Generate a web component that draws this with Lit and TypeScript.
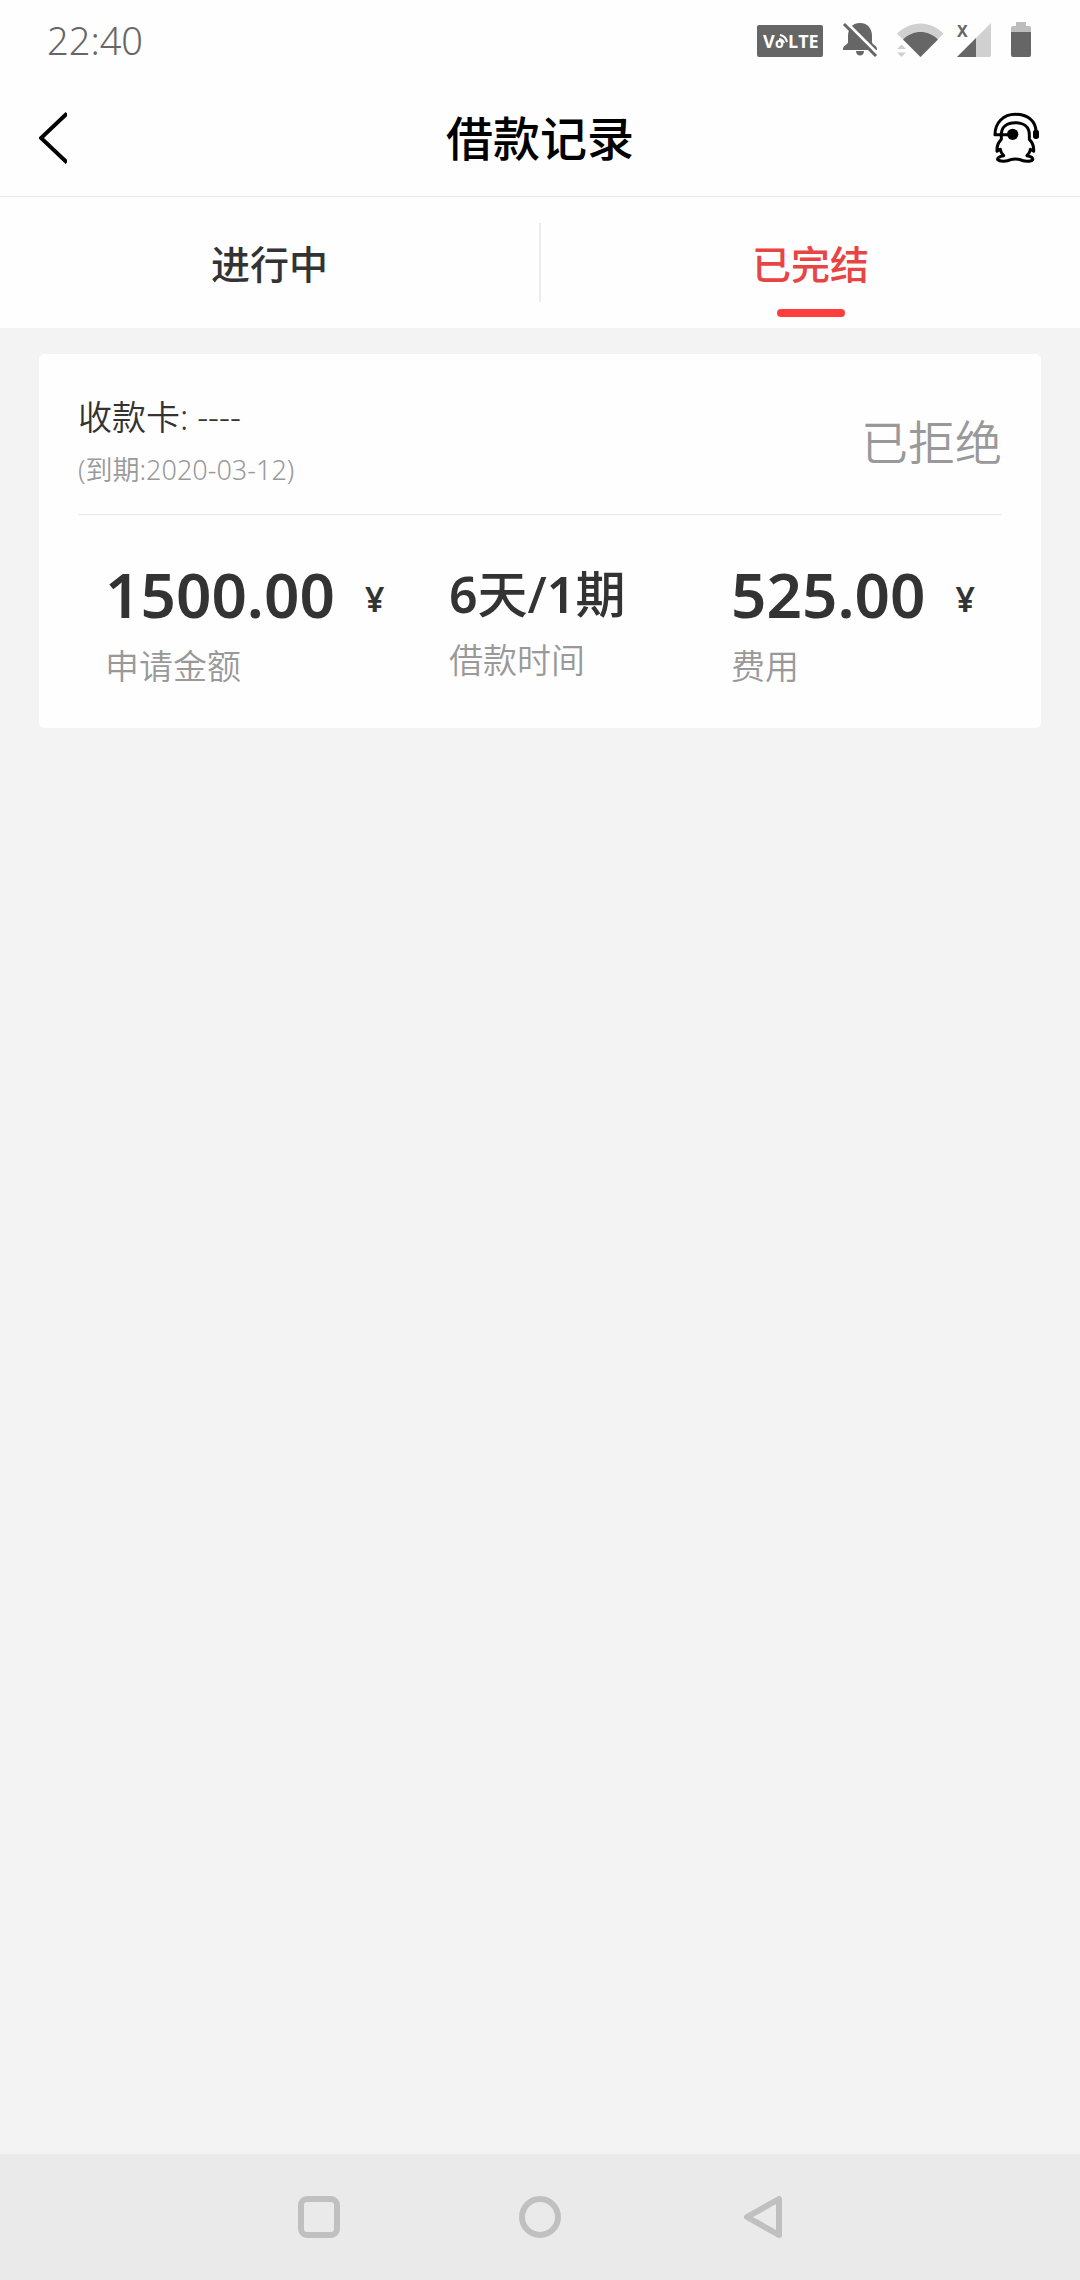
import { LitElement, html, css, svg } from "lit";
import { customElement, property, state } from "lit/decorators.js";
import { classMap } from "lit/directives/class-map.js";

@customElement("status-bar")
class StatusBar extends LitElement {
  static styles = css`
    :host {
      display: flex;
      align-items: center;
      justify-content: space-between;
      height: 80px;
      padding: 0 49px 0 47px;
      background: #fefefe;
      color: #666;
    }
    .time {
      font-size: 38px;
      line-height: 48px;
      font-weight: 350;
    }
    .icons {
      display: flex;
      gap: 12px;
    }
    svg {
      display: block;
    }
    .badge-text {
      font-family: "Open Sans", "Noto Sans", sans-serif;
      font-weight: 700;
      fill: #fff;
    }
    .mark {
      font-family: "Noto Sans", sans-serif;
      font-weight: 700;
      font-size: 16px;
      fill: #666;
    }
  `;

  render() {
    return html`
      <time class="time">22:40</time>
      <div class="icons">
        <svg width="73" height="40" viewBox="0 -2 73 40" role="img" aria-label="VoLTE">
          <rect x="0" y="3" width="66" height="32" rx="2" fill="#666" />
          <text class="badge-text" x="6" y="26" font-size="18">V</text>
          <text class="badge-text" x="18" y="26" font-size="14">o</text>
          <text class="badge-text" x="31" y="26" font-size="18">LTE</text>
          <g fill="none" stroke="#fff" stroke-width="2">
            <path d="M22 17a6 6 0 0 1 5 4" />
            <path d="M23 13a9 9 0 0 1 7 7" />
          </g>
        </svg>
        <svg width="43" height="40" viewBox="0 -2 43 40" aria-hidden="true">
          <path
            d="M18 1C10 1 6 7 6 14v6c0 3-5 3-5 7v1h34v-1c0-4-5-4-5-7v-6C30 7 26 1 18 1z"
            fill="#666"
          />
          <path d="M14 29h8c0 6-8 6-8 0z" fill="#666" />
          <path d="M4 0L37 33" stroke="#fefefe" stroke-width="3" />
          <path d="M2 2L34 34" stroke="#666" stroke-width="3" />
        </svg>
        <svg width="47" height="40" viewBox="0 -2 47 40" aria-hidden="true">
          <path d="M0 11.500C14-2 33-2 46.500 11.500L23.500 35z" fill="#d0d0d0" />
          <path d="M6 17.500C16 7.500 31 7.500 41 17.500L23.500 35z" fill="#666" />
          <path d="M0 27l4.500-4.500L9 27zM0 30.500h9L4.500 35z" fill="#d0d0d0" />
        </svg>
        <svg width="43" height="40" viewBox="0 -2 43 40" aria-hidden="true">
          <path d="M1 35L35 1v32q0 2-2 2z" fill="#d0d0d0" />
          <path d="M1 35L20 16v19z" fill="#666" />
          <text class="mark" x="1" y="15">X</text>
        </svg>
        <svg width="20" height="40" viewBox="0 -2 20 40" aria-hidden="true">
          <path d="M5 0h10v4h3q2 0 2 2v4H0V6q0-2 2-2h3z" fill="#bdbdbd" />
          <path d="M0 10h20v23q0 2-2 2H2q-2 0-2-2z" fill="#666" />
        </svg>
      </div>
    `;
  }
}

@customElement("title-bar")
class TitleBar extends LitElement {
  @property() heading = "";

  static styles = css`
    :host {
      display: grid;
      grid-template-columns: 1fr auto 1fr;
      align-items: center;
      height: 116px;
      padding: 0 39px;
      background: #fefefe;
      border-bottom: 1px solid #e8e8e8;
    }
    .heading {
      margin: 0;
      font-size: 47px;
      line-height: 60px;
      font-weight: 500;
      color: #000;
    }
    .action {
      display: block;
      padding: 0;
      border: 0;
      background: none;
      cursor: pointer;
    }
    .support {
      justify-self: end;
    }
    svg {
      display: block;
    }
  `;

  render() {
    return html`
      <button class="action" aria-label="返回">
        <svg width="28" height="52" viewBox="0 0 28 52">
          <path d="M28 1.500L2 26L28 50.500" fill="none" stroke="#000" stroke-width="4" />
        </svg>
      </button>
      <h1 class="heading">${this.heading}</h1>
      <button class="action support" aria-label="客服">
        <svg width="48" height="52" viewBox="99 66 144 156">
          <g fill="none" stroke="#000" stroke-width="9" stroke-linejoin="round">
            <path d="M228 126C228 92 202 73 166 73C130 73 105 98 105 134H150" />
            <path
              d="M124 148V134C124 110 142 98 166 98C190 98 208 110 208 134V148C218 158 222 170 221 184L211 178C210 187 205 193 201 197C213 199 220 204 218 209C212 216 190 214 180 209Q166 205 152 209C142 214 120 216 113 209C111 204 119 199 131 197C127 193 122 187 121 178L111 184C110 170 114 158 124 148Z"
            />
          </g>
          <circle cx="158" cy="133" r="17" />
          <rect x="219" y="119" width="18" height="28" rx="8" />
        </svg>
      </button>
    `;
  }
}

@customElement("loan-tabs")
class LoanTabs extends LitElement {
  @state() private active = 1;
  private labels = ["进行中", "已完结"];

  static styles = css`
    :host {
      display: block;
      background: #fefefe;
    }
    .tabs {
      display: grid;
      grid-template-columns: 1fr 2px 1fr;
      align-items: center;
      height: 131px;
    }
    .divider {
      height: 79px;
      background: #ebebeb;
    }
    .tab {
      display: flex;
      flex-direction: column;
      align-items: center;
      align-self: stretch;
      justify-content: flex-end;
      gap: 20px;
      padding: 0 0 11px;
      border: 0;
      background: none;
      font: inherit;
      font-size: 39px;
      line-height: 50px;
      font-weight: 500;
      color: #333;
      cursor: pointer;
    }
    .tab::after {
      content: "";
      width: 68px;
      height: 8px;
      border-radius: 4px;
    }
    .active {
      color: #e94444;
    }
    .active::after {
      background: #ff3d3d;
    }
  `;

  private tab(i: number) {
    return html`<button
      role="tab"
      class=${classMap({ tab: true, active: this.active === i })}
      aria-selected=${this.active === i}
      @click=${() => (this.active = i)}
    >
      ${this.labels[i]}
    </button>`;
  }

  render() {
    return html`<div class="tabs" role="tablist">
      ${this.tab(0)}<span class="divider" role="presentation"></span>${this.tab(1)}
    </div>`;
  }
}

@customElement("loan-card")
class LoanCard extends LitElement {
  static styles = css`
    :host {
      display: block;
      padding: 0 39px;
      border-radius: 5px;
      background: #fefefe;
    }
    .top {
      display: flex;
      align-items: center;
      justify-content: space-between;
      height: 160px;
      border-bottom: 1px solid #e8e8e8;
    }
    .top-text {
      padding-top: 14px;
    }
    .account {
      font-size: 34px;
      line-height: 58px;
      font-weight: 350;
      color: #333;
    }
    .due {
      font-size: 27px;
      line-height: 48px;
      font-weight: 350;
      color: #999;
    }
    .status {
      padding-top: 16px;
      font-size: 47px;
      line-height: 60px;
      font-weight: 350;
      color: #999;
    }
    .facts {
      display: grid;
      grid-template-columns: 344fr 282fr 271fr;
      margin: 0;
      padding: 35px 0 34px 27px;
    }
    .fact {
      display: flex;
      flex-direction: column-reverse;
      justify-content: flex-end;
    }
    .label {
      font-size: 34px;
      line-height: 56px;
      font-weight: 350;
      color: #999;
    }
    .value {
      margin: 0;
      font-size: 62px;
      line-height: 88px;
      font-weight: 600;
      color: #333;
      white-space: nowrap;
    }
    .period {
      padding-top: 6px;
      font-size: 50px;
      line-height: 76px;
      font-weight: 500;
    }
    .count {
      font-weight: 600;
    }
    .unit {
      margin-left: 30px;
      font-size: 34px;
      line-height: 40px;
      vertical-align: 6px;
    }
  `;

  render() {
    return html`
      <div class="top">
        <div class="top-text">
          <div class="account">收款卡: ----</div>
          <div class="due">(到期:2020-03-12)</div>
        </div>
        <div class="status">已拒绝</div>
      </div>
      <dl class="facts">
        <div class="fact">
          <dt class="label">申请金额</dt>
          <dd class="value">1500.00<span class="unit">¥</span></dd>
        </div>
        <div class="fact">
          <dt class="label">借款时间</dt>
          <dd class="value period"
            ><span class="count">6</span>天/<span class="count">1</span>期</dd
          >
        </div>
        <div class="fact">
          <dt class="label">费用</dt>
          <dd class="value">525.00<span class="unit">¥</span></dd>
        </div>
      </dl>
    `;
  }
}

@customElement("system-nav")
class SystemNav extends LitElement {
  static styles = css`
    :host {
      display: flex;
      justify-content: center;
      align-items: center;
      gap: 179px;
      height: 126px;
      background: #eaeaea;
    }
    .key {
      display: block;
      padding: 0;
      border: 0;
      background: none;
      cursor: pointer;
    }
    svg {
      display: block;
    }
  `;

  private key(label: string, shape: unknown) {
    return html`<button class="key" aria-label=${label}>
      <svg width="42" height="42" viewBox="0 0 42 42">
        <g fill="none" stroke="#c0c0c0" stroke-width="6" stroke-linejoin="round">${shape}</g>
      </svg>
    </button>`;
  }

  render() {
    return html`
      ${this.key("最近任务", svg`<rect x="3" y="3" width="36" height="36" rx="6" />`)}
      ${this.key("主屏幕", svg`<circle cx="21" cy="21" r="18" />`)}
      ${this.key("返回", svg`<path d="M39 3V39L7 21Z" />`)}
    `;
  }
}

@customElement("app-root")
class AppRoot extends LitElement {
  static styles = css`
    :host {
      display: flex;
      flex-direction: column;
      min-height: 100vh;
      background: #f3f3f3;
      font-family: "Noto Sans", "Noto Sans CJK SC", sans-serif;
    }
    .content {
      flex: 1;
      padding: 26px 39px;
    }
  `;

  render() {
    return html`
      <status-bar></status-bar>
      <title-bar heading="借款记录"></title-bar>
      <loan-tabs></loan-tabs>
      <main class="content"><loan-card></loan-card></main>
      <system-nav></system-nav>
    `;
  }
}
